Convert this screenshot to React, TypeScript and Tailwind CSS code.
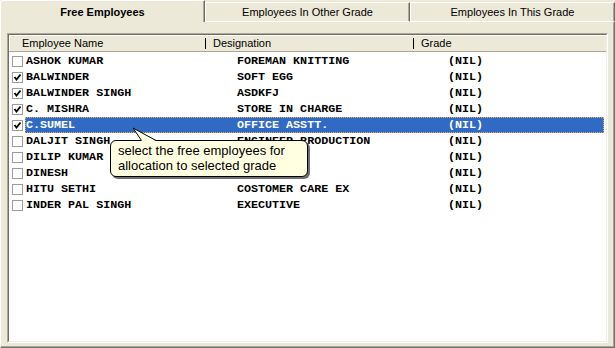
import React from 'react';

type Employee = { name: string; designation: string; checked: boolean; selected?: boolean };

const employees: Employee[] = [
  { name: 'ASHOK KUMAR', designation: 'FOREMAN KNITTING', checked: false },
  { name: 'BALWINDER', designation: 'SOFT EGG', checked: true },
  { name: 'BALWINDER SINGH', designation: 'ASDKFJ', checked: true },
  { name: 'C. MISHRA', designation: 'STORE IN CHARGE', checked: true },
  { name: 'C.SUMEL', designation: 'OFFICE ASSTT.', checked: true, selected: true },
  { name: 'DALJIT SINGH', designation: 'ENGINEER PRODUCTION', checked: false },
  { name: 'DILIP KUMAR', designation: '', checked: false },
  { name: 'DINESH', designation: '', checked: false },
  { name: 'HITU SETHI', designation: 'COSTOMER CARE EX', checked: false },
  { name: 'INDER PAL SINGH', designation: 'EXECUTIVE', checked: false },
];

function CheckBox({ checked }: { checked: boolean }) {
  return (
    <div className="w-[11px] h-[11px] border border-[#9c9c98] bg-white flex items-center justify-center">
      {checked && (
        <svg width="9" height="9" viewBox="0 0 9 9">
          <path d="M1.5 4 L3.5 6.5 L7.5 1.5" stroke="#000" strokeWidth="1.8" fill="none" />
        </svg>
      )}
    </div>
  );
}

export default function App() {
  return (
    <div className="relative w-[615px] h-[348px] bg-[#ECE9D8] flex flex-col overflow-hidden font-['Liberation_Sans',sans-serif] text-black">
      {/* Tabs */}
      <div className="flex items-end h-[22px]">
        <div className="w-[205px] h-[22px] flex items-center justify-center border-l border-t border-white rounded-tl-[3px] border-r border-r-[#716F64] shadow-[inset_-1px_0_0_#ACA899] text-[11px] font-bold pt-[1px]">
          Free Employees
        </div>
        <div className="w-[205px] h-[20px] flex items-center justify-center border-l border-t border-b border-white rounded-tl-[2px] border-r border-r-[#716F64] shadow-[inset_-1px_0_0_#ACA899] text-[11px]">
          Employees In Other Grade
        </div>
        <div className="w-[205px] h-[20px] flex items-center justify-center border-l border-t border-b border-white rounded-tl-[2px] border-r border-r-[#716F64] shadow-[inset_-1px_0_0_#ACA899] text-[11px]">
          Employees In This Grade
        </div>
      </div>

      {/* Panel */}
      <div className="flex-1 flex flex-col border-l border-white border-r border-b border-r-[#716F64] border-b-[#716F64] shadow-[inset_-1px_-1px_0_#ACA899] pt-[11px] pl-[6px] pr-[6px] pb-[4px]">
        <div className="flex-1 flex flex-col border-t border-l border-[#ACA899] border-b-white border-r-white border-b border-r">
          <div className="flex-1 flex flex-col border-t border-l border-[#716F64] border-b border-r border-b-[#F1EFE2] border-r-[#F1EFE2] bg-white">
            {/* Header */}
            <div className="flex items-center h-[17px] bg-[#ECE9D8] border-b border-[#ACA899] shadow-[inset_1px_1px_0_#fff] text-[11px]">
              <div className="w-[196px] pl-[13px]">Employee Name</div>
              <div className="w-[208px] flex items-center">
                <span className="w-px h-[11px] bg-black mr-[7px]" />
                Designation
              </div>
              <div className="flex-1 flex items-center">
                <span className="w-px h-[11px] bg-black mr-[7px]" />
                Grade
              </div>
            </div>

            {/* Rows */}
            <div className="flex flex-col pt-px font-['Liberation_Mono',monospace] text-[11.7px] font-bold">
              {employees.map((e) => (
                <div key={e.name} className="flex items-center h-[16px] pl-[3px] pr-[2px]">
                  <CheckBox checked={e.checked} />
                  <div
                    className={
                      e.selected
                        ? 'ml-[2px] flex-1 h-[16px] flex items-center bg-[#316AC5] text-white border border-dotted border-[#E8B34A] pt-px'
                        : 'ml-[2px] flex-1 h-[16px] flex items-center pl-[1px] pt-[2px]'
                    }
                  >
                    <div className="w-[211px] whitespace-pre">{e.name}</div>
                    <div className="w-[211px] whitespace-pre">{e.designation}</div>
                    <div className="flex-1">(NIL)</div>
                  </div>
                </div>
              ))}
            </div>
          </div>
        </div>
      </div>

      {/* Balloon tooltip */}
      <div className="absolute left-[110px] top-[140px] w-[198px] h-[37px] bg-[#FFFFE1] border border-black rounded-[6px] shadow-[2px_2px_0_#6f6f6f] pl-[7px] pt-[2px] text-[13px] leading-[15px]">
        <div>select the free employees for</div>
        <div>allocation to selected grade</div>
      </div>
      <svg className="absolute left-[130px] top-[126px]" width="34" height="16" viewBox="0 0 34 16">
        <path d="M3 2 L11.5 15 L26 15 Z" fill="#FFFFE1" />
        <path d="M11.5 14.5 L3 2 L26 14.5" stroke="#000" strokeWidth="1" fill="none" />
      </svg>
    </div>
  );
}
